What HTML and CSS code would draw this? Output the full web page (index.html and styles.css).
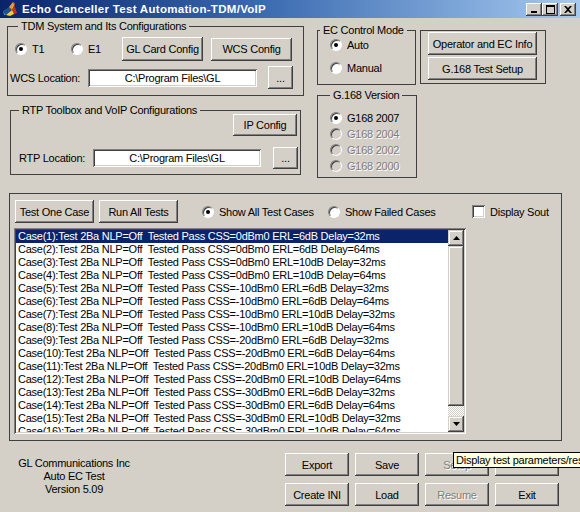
FILE: index.html
```html
<!DOCTYPE html>
<html>
<head>
<meta charset="utf-8">
<link rel="stylesheet" href="styles.css">
</head>
<body>
<div class="window">
  <div class="titlebar">
    <svg class="appicon" width="16" height="16" viewBox="0 0 16 16">
      <polygon points="0,10 6,6 9,9 3,14" fill="#1c4f8c"/>
      <polygon points="6,6 10,1 12,3 9,9" fill="#e8a020"/>
      <polygon points="10,1 14,12 11,13 9,9 12,3" fill="#c8301c"/>
      <polygon points="9,9 11,13 7,15 3,14" fill="#f0d030"/>
      <polygon points="0,10 3,14 1,14" fill="#3a8fd0"/>
    </svg>
    <span class="titletext">Echo Canceller Test Automation-TDM/VoIP</span>
    <div class="tbtns">
      <span class="tbtn"><svg width="8" height="8" viewBox="0 0 8 8"><rect x="1" y="6" width="6" height="2" fill="#000"/></svg></span>
      <span class="tbtn"><svg width="9" height="9" viewBox="0 0 9 9"><rect x="0.5" y="0.5" width="8" height="8" fill="none" stroke="#000"/><rect x="0" y="0" width="9" height="2" fill="#000"/></svg></span>
      <span class="tbtn closebtn"><svg width="8" height="7" viewBox="0 0 8 7"><path d="M0,0 L2,0 L4,2 L6,0 L8,0 L5,3.5 L8,7 L6,7 L4,5 L2,7 L0,7 L3,3.5 Z" fill="#000"/></svg></span>
    </div>
  </div>

  <div class="top">
    <div class="col1">
      <div class="group tdm">
        <span class="legend">TDM System and Its Configurations</span>
        <div class="row r1">
          <span class="opt w-t1"><span class="radio on"></span>T1</span>
          <span class="opt w-e1"><span class="radio"></span>E1</span>
          <span class="btn w-glcard">GL Card Config</span>
          <span class="btn w-wcs">WCS Config</span>
        </div>
        <div class="row r2">
          <span class="lbl w-wcsl">WCS Location:</span>
          <span class="field w-field1">C:\Program Files\GL</span>
          <span class="btn w-dots dots1">...</span>
        </div>
      </div>
      <div class="group rtp">
        <span class="legend">RTP Toolbox and VoIP Configurations</span>
        <div class="row r1">
          <span class="btn w-ip">IP Config</span>
        </div>
        <div class="row r2">
          <span class="lbl w-rtpl">RTP Location:</span>
          <span class="field w-field2">C:\Program Files\GL</span>
          <span class="btn w-dots dots2">...</span>
        </div>
      </div>
    </div>

    <div class="col2">
      <div class="group ec">
        <span class="legend">EC Control Mode</span>
        <span class="opt"><span class="radio on"></span>Auto</span>
        <span class="opt"><span class="radio"></span>Manual</span>
      </div>
      <div class="group ver">
        <span class="legend">G.168 Version</span>
        <span class="opt"><span class="radio on"></span>G168 2007</span>
        <span class="opt dis"><span class="radio"></span>G168 2004</span>
        <span class="opt dis"><span class="radio"></span>G168 2002</span>
        <span class="opt dis"><span class="radio"></span>G168 2000</span>
      </div>
    </div>

    <div class="col3">
      <div class="group oper">
        <span class="btn w-oper">Operator and EC Info</span>
        <span class="btn w-oper">G.168 Test Setup</span>
      </div>
    </div>
  </div>

  <div class="group tests">
    <div class="row trow">
      <span class="btn w-test">Test One Case</span>
      <span class="btn w-test run">Run All Tests</span>
      <span class="opt w-showall"><span class="radio on"></span>Show All Test Cases</span>
      <span class="opt w-showfail"><span class="radio"></span>Show Failed Cases</span>
      <span class="opt"><span class="check"></span>Display Sout</span>
    </div>
    <div class="list">
      <div class="items">
        <div class="item sel">Case(1):Test 2Ba NLP=Off  Tested Pass CSS=0dBm0 ERL=6dB Delay=32ms</div>
        <div class="item">Case(2):Test 2Ba NLP=Off  Tested Pass CSS=0dBm0 ERL=6dB Delay=64ms</div>
        <div class="item">Case(3):Test 2Ba NLP=Off  Tested Pass CSS=0dBm0 ERL=10dB Delay=32ms</div>
        <div class="item">Case(4):Test 2Ba NLP=Off  Tested Pass CSS=0dBm0 ERL=10dB Delay=64ms</div>
        <div class="item">Case(5):Test 2Ba NLP=Off  Tested Pass CSS=-10dBm0 ERL=6dB Delay=32ms</div>
        <div class="item">Case(6):Test 2Ba NLP=Off  Tested Pass CSS=-10dBm0 ERL=6dB Delay=64ms</div>
        <div class="item">Case(7):Test 2Ba NLP=Off  Tested Pass CSS=-10dBm0 ERL=10dB Delay=32ms</div>
        <div class="item">Case(8):Test 2Ba NLP=Off  Tested Pass CSS=-10dBm0 ERL=10dB Delay=64ms</div>
        <div class="item">Case(9):Test 2Ba NLP=Off  Tested Pass CSS=-20dBm0 ERL=6dB Delay=32ms</div>
        <div class="item">Case(10):Test 2Ba NLP=Off  Tested Pass CSS=-20dBm0 ERL=6dB Delay=64ms</div>
        <div class="item">Case(11):Test 2Ba NLP=Off  Tested Pass CSS=-20dBm0 ERL=10dB Delay=32ms</div>
        <div class="item">Case(12):Test 2Ba NLP=Off  Tested Pass CSS=-20dBm0 ERL=10dB Delay=64ms</div>
        <div class="item">Case(13):Test 2Ba NLP=Off  Tested Pass CSS=-30dBm0 ERL=6dB Delay=32ms</div>
        <div class="item">Case(14):Test 2Ba NLP=Off  Tested Pass CSS=-30dBm0 ERL=6dB Delay=64ms</div>
        <div class="item">Case(15):Test 2Ba NLP=Off  Tested Pass CSS=-30dBm0 ERL=10dB Delay=32ms</div>
        <div class="item">Case(16):Test 2Ba NLP=Off  Tested Pass CSS=-30dBm0 ERL=10dB Delay=64ms</div>
      </div>
      <div class="scroll">
        <span class="sbtn"><svg width="7" height="4" viewBox="0 0 7 4"><polygon points="3.5,0 7,4 0,4" fill="#000"/></svg></span>
        <span class="thumb"></span>
        <span class="track"></span>
        <span class="sbtn"><svg width="7" height="4" viewBox="0 0 7 4"><polygon points="0,0 7,0 3.5,4" fill="#000"/></svg></span>
      </div>
    </div>
  </div>

  <div class="footer">
    <div class="info">
      <div>GL Communications Inc</div>
      <div>Auto EC Test</div>
      <div>Version 5.09</div>
    </div>
    <div class="bgrid">
      <span class="btn">Export</span>
      <span class="btn">Save</span>
      <span class="btn disabled">Setup</span>
      <span class="btn"></span>
      <span class="btn">Create INI</span>
      <span class="btn">Load</span>
      <span class="btn disabled">Resume</span>
      <span class="btn">Exit</span>
    </div>
  </div>

  <div class="tooltip">Display test parameters/results</div>
</div>
</body>
</html>
```

FILE: styles.css
```css
html, body {
  margin: 0;
  padding: 0;
}
body {
  width: 580px;
  height: 512px;
  overflow: hidden;
  background: #d4d0c8;
  font-family: "Liberation Sans", Arial, sans-serif;
  font-size: 11px;
  letter-spacing: -0.25px;
  color: #000;
}
.window {
  position: relative;
  width: 580px;
  height: 512px;
  overflow: hidden;
}

/* Title bar */
.titlebar {
  height: 18px;
  display: flex;
  align-items: center;
  background: linear-gradient(to right, #0a246a 0%, #3a6ab0 45%, #a6caf0 100%);
  color: #fff;
}
.appicon {
  margin-left: 3px;
  flex: none;
}
.titletext {
  margin-left: 3px;
  font-weight: bold;
  font-size: 11.5px;
  letter-spacing: 0.3px;
  white-space: nowrap;
}
.tbtns {
  margin-left: auto;
  margin-right: 4px;
  display: flex;
}
.tbtn {
  box-sizing: border-box;
  width: 16px;
  height: 13px;
  background: #d4d0c8;
  box-shadow: inset -1px -1px #404040, inset 1px 1px #fff, inset -2px -2px #808080;
  display: flex;
  align-items: center;
  justify-content: center;
}
.closebtn {
  margin-left: 2px;
}

/* Generic controls */
.btn {
  box-sizing: border-box;
  height: 23px;
  background: #d4d0c8;
  box-shadow: inset -1px -1px #404040, inset 1px 1px #fff, inset -2px -2px #808080, inset 2px 2px #d4d0c8;
  display: flex;
  align-items: center;
  justify-content: center;
  white-space: nowrap;
  flex: none;
}
.btn.disabled {
  color: #808080;
  text-shadow: 1px 1px 0 #fff;
}
.field {
  box-sizing: border-box;
  height: 18px;
  background: #fff;
  box-shadow: inset 1px 1px #808080, inset -1px -1px #fff, inset 2px 2px #404040, inset -2px -2px #d4d0c8;
  display: flex;
  align-items: center;
  justify-content: center;
  white-space: nowrap;
  flex: none;
}
.opt {
  display: flex;
  align-items: center;
  gap: 5px;
  height: 16px;
  white-space: nowrap;
  flex: none;
}
.opt.dis {
  color: #808080;
  text-shadow: 1px 1px 0 #fff;
}
.radio {
  position: relative;
  box-sizing: border-box;
  width: 12px;
  height: 12px;
  border-radius: 50%;
  background: #fff;
  border: 1px solid;
  border-color: #808080 #fff #fff #808080;
  box-shadow: inset 1px 1px 0 #404040;
  flex: none;
}
.opt.dis .radio {
  background: #d4d0c8;
}
.radio.on::after {
  content: "";
  position: absolute;
  left: 3px;
  top: 3px;
  width: 4px;
  height: 4px;
  border-radius: 50%;
  background: #000;
}
.check {
  box-sizing: border-box;
  width: 13px;
  height: 13px;
  background: #fff;
  box-shadow: inset 1px 1px #808080, inset -1px -1px #fff, inset 2px 2px #404040, inset -2px -2px #d4d0c8;
  flex: none;
}
.lbl {
  white-space: nowrap;
  flex: none;
}
.row {
  display: flex;
  align-items: center;
}

/* Groups */
.group {
  position: relative;
  box-sizing: border-box;
  border: 1px solid #404040;
}
.legend {
  position: absolute;
  top: -7px;
  line-height: 13px;
  padding: 0 3px;
  background: #d4d0c8;
  white-space: nowrap;
}

.top {
  display: flex;
  align-items: flex-start;
  height: 159px;
}
.col1 {
  margin-left: 7px;
  width: 297px;
  flex: none;
}
.col2 {
  margin-left: 13px;
  width: 100px;
  flex: none;
}
.col3 {
  margin-left: 3px;
  flex: none;
}

/* TDM */
.tdm {
  margin-top: 8px;
  width: 297px;
  height: 70px;
  padding-left: 7px;
}
.tdm .legend { left: 10px; }
.tdm .r1 {
  margin-top: 10px;
  height: 24px;
}
.w-t1 { width: 56px; }
.w-e1 { width: 51px; }
.w-glcard { width: 81px; height: 24px; }
.w-wcs { width: 81px; margin-left: 8px; }
.tdm .r2 {
  margin-top: 5px;
  height: 23px;
  margin-left: -5px;
}
.w-wcsl { width: 78px; }
.w-field1 { width: 169px; }
.w-dots { width: 25px; }
.dots1 { margin-left: 11px; }

/* RTP */
.rtp {
  margin-top: 14px;
  margin-left: 3px;
  width: 291px;
  height: 65px;
}
.rtp .legend { left: 8px; }
.rtp .r1 {
  margin-top: 3px;
  justify-content: flex-end;
  padding-right: 3px;
}
.w-ip { width: 64px; height: 22px; }
.rtp .r2 {
  margin-top: 11px;
  padding-left: 8px;
  height: 22px;
}
.w-rtpl { width: 74px; }
.w-field2 { width: 168px; }
.dots2 { margin-left: 12px; height: 22px; }

/* EC */
.ec {
  margin-top: 12px;
  width: 99px;
  height: 55px;
  padding: 6px 0 0 12px;
  display: flex;
  flex-direction: column;
  gap: 7px;
}
.ec .legend { left: 2px; }

/* G.168 Version */
.ver {
  margin-top: 10px;
  width: 100px;
  height: 83px;
  padding: 14px 0 0 12px;
  display: flex;
  flex-direction: column;
  gap: 0;
}
.ver .legend { left: 12px; }

/* Operator */
.oper {
  margin-top: 12px;
  width: 126px;
  height: 54px;
  padding: 1px 0 0 7px;
  display: flex;
  flex-direction: column;
  gap: 2px;
}
.w-oper { width: 109px; }

/* Tests group */
.tests {
  margin-left: 9px;
  margin-top: 16px;
  width: 553px;
  height: 248px;
  padding-left: 5px;
}
.trow {
  margin-top: 6px;
  height: 23px;
}
.w-test { width: 79px; }
.run { margin-left: 5px; }
.w-showall { width: 126px; margin-left: 24px; }
.w-showfail { width: 144px; }

.list {
  box-sizing: border-box;
  margin-top: 5px;
  margin-left: -1px;
  width: 452px;
  height: 206px;
  background: #fff;
  box-shadow: inset 1px 1px #808080, inset -1px -1px #fff, inset 2px 2px #404040, inset -2px -2px #d4d0c8;
  padding: 2px;
  display: flex;
}
.items {
  flex: 1;
  overflow: hidden;
}
.item {
  height: 13px;
  line-height: 13px;
  padding-left: 2px;
  white-space: pre;
}
.item.sel {
  background: #0a246a;
  color: #fff;
}
.scroll {
  width: 16px;
  display: flex;
  flex-direction: column;
  flex: none;
}
.sbtn {
  box-sizing: border-box;
  width: 16px;
  height: 16px;
  background: #d4d0c8;
  box-shadow: inset -1px -1px #404040, inset 1px 1px #d4d0c8, inset -2px -2px #808080, inset 2px 2px #fff;
  display: flex;
  align-items: center;
  justify-content: center;
  flex: none;
}
.thumb {
  box-sizing: border-box;
  height: 160px;
  background: #d4d0c8;
  box-shadow: inset -1px -1px #404040, inset 1px 1px #d4d0c8, inset -2px -2px #808080, inset 2px 2px #fff;
  flex: none;
}
.track {
  flex: 1;
  background: repeating-conic-gradient(#fff 0 25%, #d4d0c8 0 50%) 0 0 / 2px 2px;
}

/* Footer */
.footer {
  display: flex;
  align-items: flex-start;
}
.info {
  width: 148px;
  margin-top: 16px;
  line-height: 13px;
  text-align: center;
  flex: none;
}
.bgrid {
  margin-left: 137px;
  margin-top: 12px;
  display: grid;
  grid-template-columns: repeat(4, 64px);
  grid-auto-rows: 23px;
  column-gap: 6px;
  row-gap: 7px;
}

.tooltip {
  position: absolute;
  left: 453px;
  top: 452px;
  height: 16px;
  box-sizing: border-box;
  border: 1px solid #000;
  background: #ffffe1;
  padding: 0 2px;
  line-height: 14px;
  white-space: nowrap;
}
```
